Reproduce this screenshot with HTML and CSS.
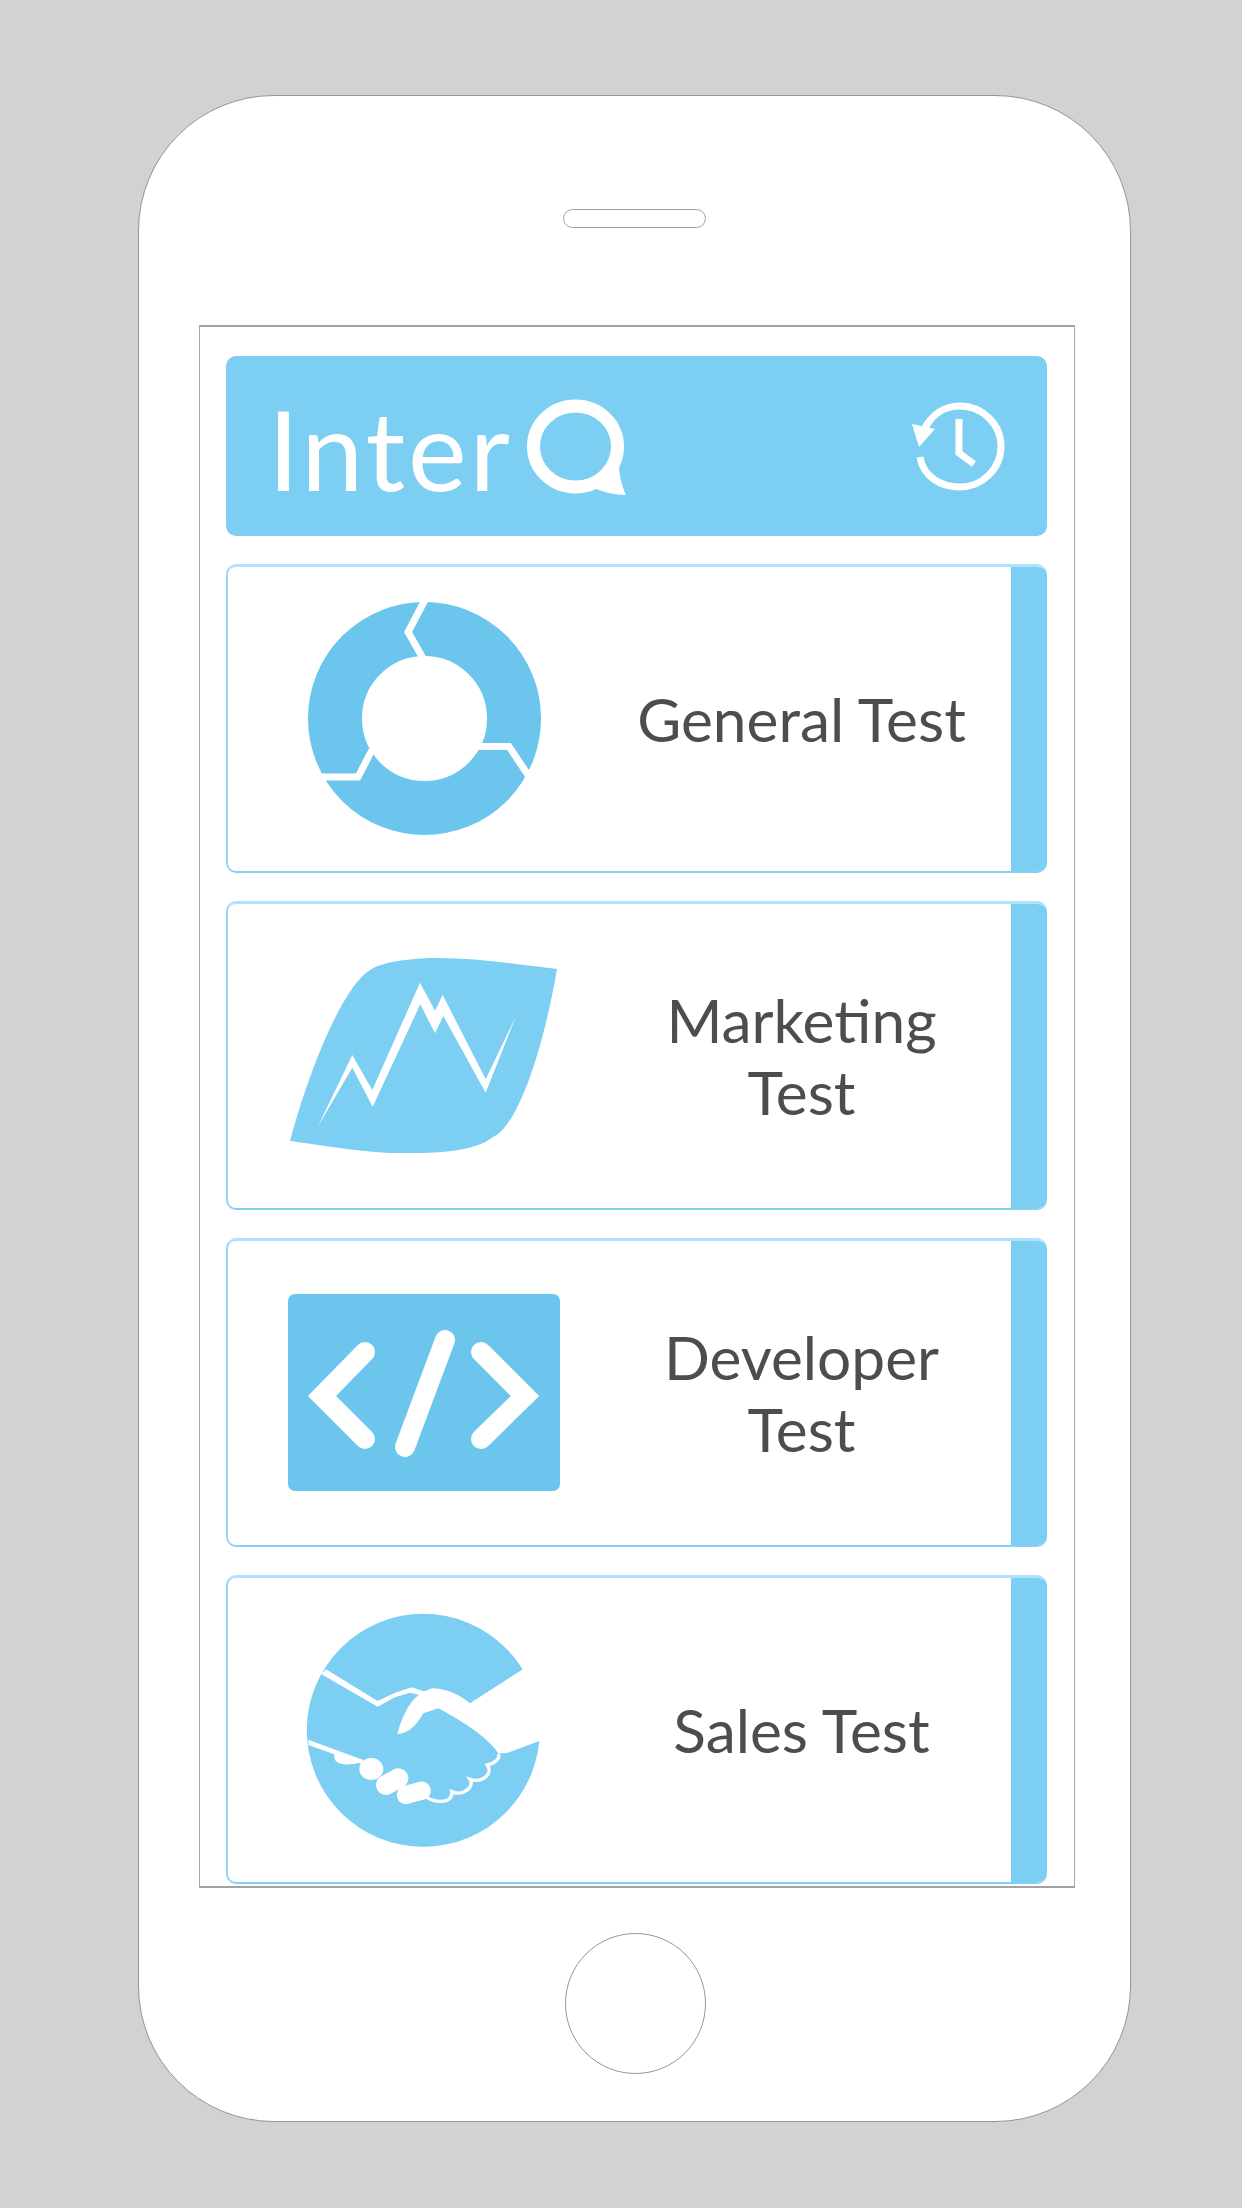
FILE: index.html
```html
<!DOCTYPE html>
<html lang="en">
<head>
<meta charset="utf-8">
<title>InterQ</title>
<link rel="stylesheet" href="styles.css">
</head>
<body>
<main class="phone">
  <div class="speaker"></div>
  <section class="screen">
    <header class="app-bar">
      <div class="logo">
        <span class="logo-text">Inter</span>
        <svg class="logo-q" viewBox="525 397 104 100" role="img" aria-label="Q">
          <ellipse class="q-ring" cx="575.5" cy="445.5" rx="42" ry="40.5"/>
          <path class="q-tail" d="M606 478 L619 462 C619 475 622 485 626 494 C614 494 603 491 594 487 Z"/>
        </svg>
      </div>
      <svg class="history" viewBox="905 395 110 100" role="img" aria-label="History">
        <path class="clock-line" d="M920 456 C923 475 940 486 960 486 C982 486 1001 468 1001 445 C1001 423 982 405 960 405 C945 405 931 413 923 431"/>
        <path class="clock-fill" d="M912 423 L935 428 L919 446 Z"/>
        <path class="clock-line" d="M959 418 V452 L974 463"/>
      </svg>
    </header>

    <article class="card">
      <svg class="card-icon" viewBox="228 567 392 304" role="img" aria-label="Donut chart">
        <circle class="donut" cx="424.5" cy="718.5" r="89.5"/>
        <path class="cut" d="M426 598 L408 632 L424 660"/>
        <path class="cut" d="M474 746.5 H509 L530 778"/>
        <path class="cut" d="M372 750 L358 777 H318"/>
      </svg>
      <h2 class="card-title">General Test</h2>
      <div class="stripe"></div>
    </article>

    <article class="card">
      <svg class="card-icon" viewBox="228 904 392 304" role="img" aria-label="Line chart">
        <path class="fill-light" d="M290 1141 C312 1060 345 985 370 970 C385 960 420 958 437 958 C480 958 520 965 557 969 C545 1040 520 1125 493 1137 C470 1155 420 1153 400 1153 C365 1153 320 1145 290 1141 Z"/>
        <path class="fill-white" d="M317.7 1126.7 L352.3 1055 L372.3 1090 L420 982.7 L435 1010.7 L442.7 995 L485.7 1079.3 L516 1016 L485.7 1092.7 L443.3 1016 L435 1033.3 L420.3 1004.3 L372.7 1106.7 L352.3 1067.7 Z"/>
      </svg>
      <h2 class="card-title">Marketing<br>Test</h2>
      <div class="stripe"></div>
    </article>

    <article class="card">
      <svg class="card-icon" viewBox="228 1241 392 304" role="img" aria-label="Code">
        <rect class="fill-dark" x="288" y="1294" width="272" height="197" rx="7"/>
        <path class="code" d="M365 1352 L322 1396 L365 1439"/>
        <path class="code" d="M481 1352 L525 1396 L481 1439"/>
        <path class="code slash" d="M445 1340 L405 1447"/>
      </svg>
      <h2 class="card-title">Developer<br>Test</h2>
      <div class="stripe"></div>
    </article>

    <article class="card">
      <svg class="card-icon" viewBox="228 1578 392 304" role="img" aria-label="Handshake">
        <circle class="fill-light" cx="423.3" cy="1730.3" r="116.5"/>
        <g transform="translate(280 1590) scale(0.3333)">
          <path class="fill-white" d="M860 180 L725 240 L570 340 C540 315 500 295 455 295 L430 305 C395 325 370 365 352 432 C385 432 410 405 430 370 L475 355 C560 400 630 450 655 490 L680 490 L780 452 L860 440 Z"/>
          <path class="fill-white" d="M138 238 L293 333 L345 308 L395 292 L435 305 L420 315 L390 308 L345 322 L293 350 L123 252 Z"/>
          <path class="fill-white" d="M85 449 L250 510 L245 522 L85 465 Z"/>
          <path class="fill-white" d="M163 492 C158 522 190 532 250 515 Z"/>
          <path class="scallop" d="M655 492 C662 505 645 520 622 525 C640 550 610 580 570 568 C585 590 550 620 515 605 C520 640 470 640 440 622"/>
          <ellipse class="fill-white" cx="274" cy="537" rx="36" ry="33"/>
          <path class="finger" d="M318 585 L355 565"/>
          <path class="finger small" d="M378 615 L425 602"/>
        </g>
      </svg>
      <h2 class="card-title">Sales Test</h2>
      <div class="stripe"></div>
    </article>
  </section>
  <div class="home"></div>
</main>
</body>
</html>
```

FILE: styles.css
```css
* { box-sizing: border-box; }

html, body { margin: 0; }

body {
  width: 1242px;
  height: 2208px;
  padding: 95px 0 0 138px;
  background: #d1d2d4;
  font-family: Lato, "Open Sans", sans-serif;
  overflow: hidden;
}

.phone {
  width: 993px;
  height: 2027px;
  background: #fff;
  border: 1px solid #939598;
  border-radius: 136px;
  display: flex;
  flex-direction: column;
  align-items: flex-start;
}

.speaker {
  width: 143px;
  height: 19px;
  margin: 113px 0 0 424px;
  border: 1px solid #a0a2a5;
  border-radius: 9.5px;
}

.screen {
  width: 876px;
  height: 1563px;
  margin: 97px 0 0 60px;
  padding: 29px 27px 0 26px;
  border: 1px solid #a7a9ac;
  border-top: 2px solid #a0a2a5;
  border-bottom: 2px solid #a0a2a5;
  display: flex;
  flex-direction: column;
  gap: 28px;
}

.app-bar {
  height: 180px;
  flex: none;
  padding: 0 32px 0 42px;
  background: #7dcef3;
  border-radius: 10px;
  display: flex;
  align-items: center;
  justify-content: space-between;
}

.logo {
  display: flex;
  align-items: flex-end;
  height: 100px;
  margin-top: 4px;
}

.logo-text {
  color: #fff;
  font-size: 111px;
  font-weight: 400;
  line-height: 100px;
  letter-spacing: 3px;
}

.logo-q {
  width: 104px;
  height: 100px;
  margin-left: 12px;
}

.q-ring {
  fill: none;
  stroke: #fff;
  stroke-width: 13;
}

.q-tail { fill: #fff; }

.history {
  width: 110px;
  height: 100px;
}

.clock-line {
  fill: none;
  stroke: #fff;
  stroke-width: 7;
}

.clock-fill { fill: #fff; }

.card {
  height: 309px;
  flex: none;
  display: grid;
  grid-template-columns: 392px 1fr 36px;
  align-items: center;
  border-top: 3px solid #aee3fb;
  border-left: 2px solid #95d8f7;
  border-bottom: 2px solid #85d1f4;
  border-radius: 10px;
  overflow: hidden;
}

.card-icon {
  width: 392px;
  height: 304px;
  display: block;
}

.card-title {
  margin: 0;
  padding-right: 28px;
  color: #4d4d4d;
  font-size: 60.4px;
  font-weight: 400;
  line-height: 72px;
  text-align: center;
}

.stripe {
  height: 100%;
  background: #7dcef3;
}

.donut {
  fill: none;
  stroke: #6bc5ed;
  stroke-width: 54;
}

.cut {
  fill: none;
  stroke: #fff;
  stroke-width: 7;
}

.fill-light { fill: #7dcef3; }
.fill-dark { fill: #6bc5ed; }
.fill-white { fill: #fff; }

.code {
  fill: none;
  stroke: #fff;
  stroke-width: 20;
  stroke-linecap: round;
  stroke-linejoin: miter;
}

.code.slash { stroke-width: 20; }

.scallop {
  fill: none;
  stroke: #fff;
  stroke-width: 10;
}

.finger {
  fill: none;
  stroke: #fff;
  stroke-width: 60;
  stroke-linecap: round;
}

.finger.small { stroke-width: 55; }

.home {
  width: 141px;
  height: 141px;
  margin: 45px 0 0 426px;
  border: 1px solid #939598;
  border-radius: 50%;
}
```
